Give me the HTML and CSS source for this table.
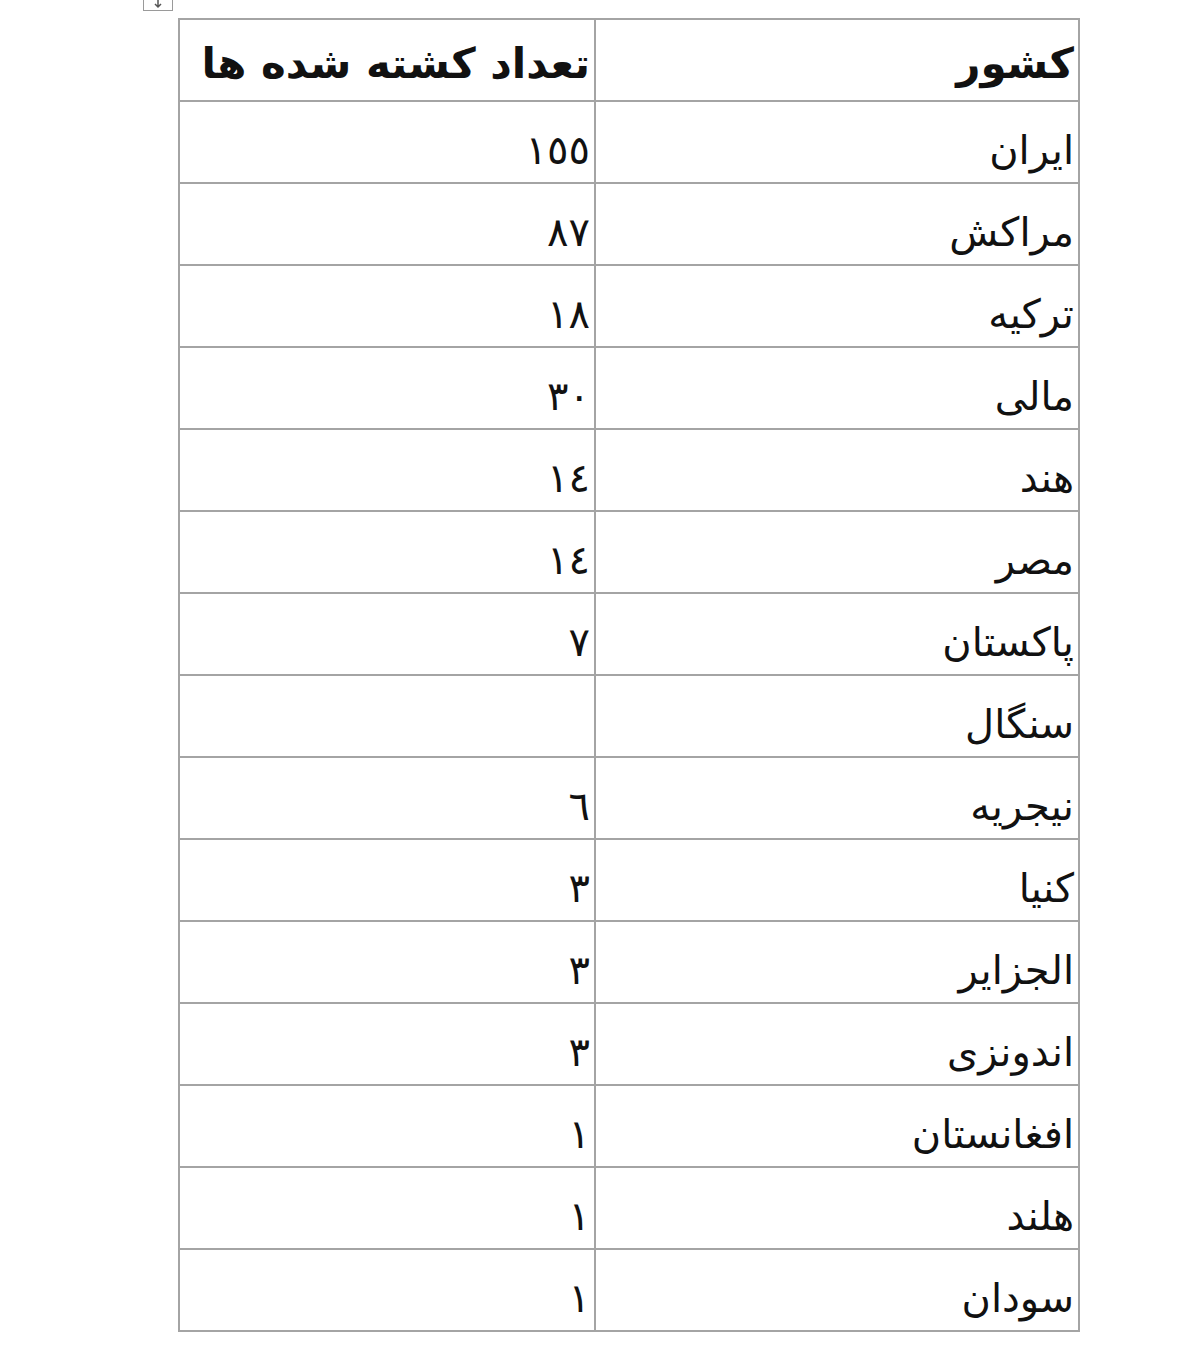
FILE: index.html
```html
<!DOCTYPE html>
<html lang="fa">
<head>
<meta charset="utf-8">
<link rel="stylesheet" href="styles.css">
</head>
<body>
<div class="page">
  <div class="handle">
    <svg width="14" height="12" viewBox="0 0 14 12"><path d="M7 0v9M4 6l3 3 3-3" stroke="#555" stroke-width="1.5" fill="none"/></svg>
  </div>
  <table class="grid" dir="rtl">
    <tr class="head"><td class="c1">کشور</td><td class="c2">تعداد کشته شده ها</td></tr>
    <tr><td class="c1">ایران</td><td class="c2">١٥٥</td></tr>
    <tr><td class="c1">مراکش</td><td class="c2">٨٧</td></tr>
    <tr><td class="c1">ترکیه</td><td class="c2">١٨</td></tr>
    <tr><td class="c1">مالی</td><td class="c2">٣٠</td></tr>
    <tr><td class="c1">هند</td><td class="c2">١٤</td></tr>
    <tr><td class="c1">مصر</td><td class="c2">١٤</td></tr>
    <tr><td class="c1">پاکستان</td><td class="c2">٧</td></tr>
    <tr><td class="c1">سنگال</td><td class="c2"></td></tr>
    <tr><td class="c1">نیجریه</td><td class="c2">٦</td></tr>
    <tr><td class="c1">کنیا</td><td class="c2">٣</td></tr>
    <tr><td class="c1">الجزایر</td><td class="c2">٣</td></tr>
    <tr><td class="c1">اندونزی</td><td class="c2">٣</td></tr>
    <tr><td class="c1">افغانستان</td><td class="c2">١</td></tr>
    <tr><td class="c1">هلند</td><td class="c2">١</td></tr>
    <tr><td class="c1">سودان</td><td class="c2">١</td></tr>
  </table>
</div>
</body>
</html>
```
FILE: styles.css
```css
html, body {
  margin: 0;
  padding: 0;
  background: #ffffff;
}
.page {
  position: relative;
  width: 1200px;
  height: 1352px;
  padding-top: 18px;
  box-sizing: border-box;
}
.handle {
  position: absolute;
  left: 143px;
  top: -3px;
  width: 30px;
  height: 14px;
  border: 1px solid #9a9a9a;
  box-sizing: border-box;
  display: flex;
  justify-content: center;
  align-items: flex-end;
}
.grid {
  margin-left: 178px;
  border-collapse: separate;
  border-spacing: 0;
  border: 1px solid #a4a4a4;
  font-family: "DejaVu Sans", sans-serif;
  font-size: 40px;
  color: #111;
}
.grid td {
  border: 1px solid #a4a4a4;
  height: 82px;
  padding: 16px 4px 0 0;
  text-align: right;
  vertical-align: middle;
  box-sizing: border-box;
  line-height: 1;
}
.grid .c1 { width: 484px; }
.grid .c2 { width: 416px; }
.head td {
  font-weight: bold;
  font-size: 42px;
  padding-top: 8px;
}
```
